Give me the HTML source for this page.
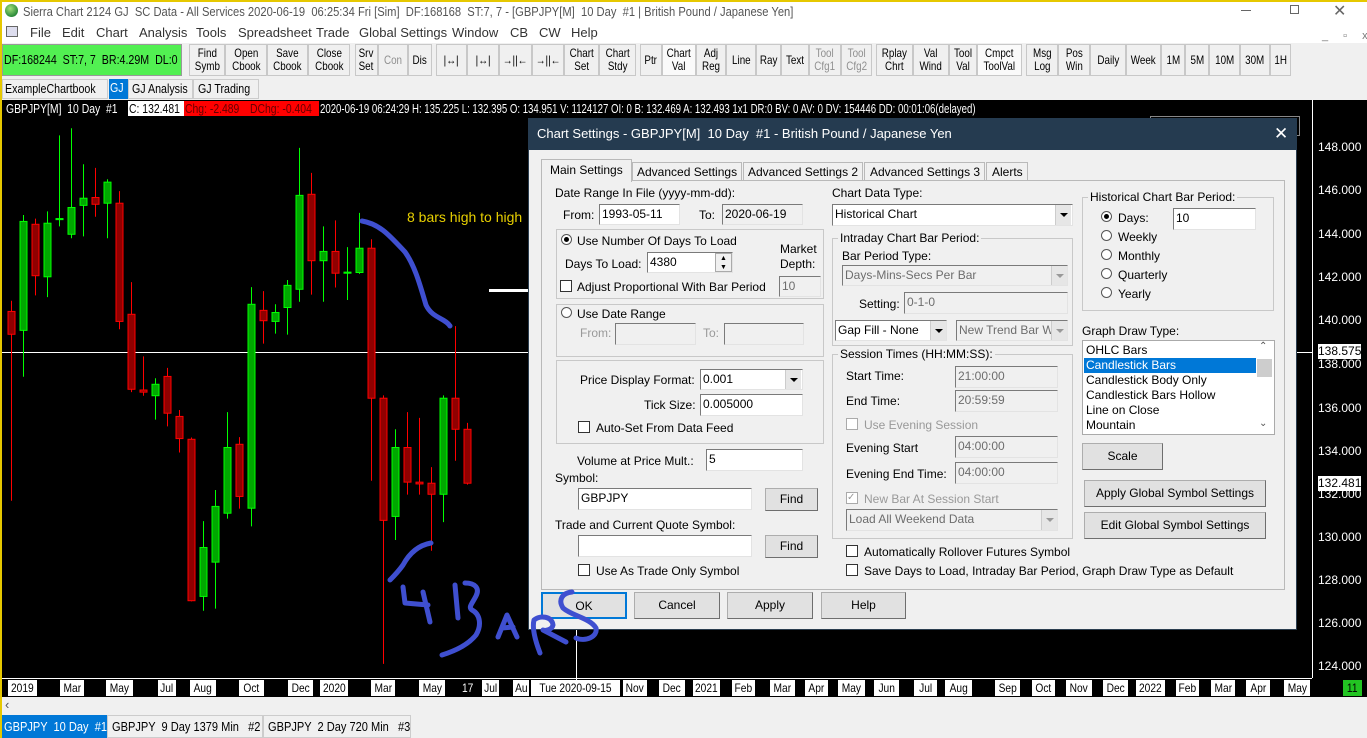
<!DOCTYPE html>
<html><head><meta charset="utf-8">
<style>
*{box-sizing:border-box;margin:0;padding:0}
body{width:1367px;height:738px;overflow:hidden;background:#f0f0f0;font-family:"Liberation Sans",sans-serif;font-size:12px;color:#000;position:relative}
.a{position:absolute;white-space:nowrap}
.sx{display:inline-block;transform:scaleX(.8);transform-origin:0 50%;white-space:nowrap}
.tb{position:absolute;top:44px;height:32px;border:1px solid #c8c8c8;background:#f0f0f0;font-size:12px;line-height:13px;text-align:center;display:flex;align-items:center;justify-content:center;overflow:visible}
.tb span{display:inline-block;transform:scaleX(.82);white-space:nowrap}
.g{color:#909090}
.dl{position:absolute;top:680px;height:16px;background:#fff;color:#000;font-size:12px;line-height:16px;text-align:center}
.dl span{display:inline-block;transform:scaleX(.85)}
.pl{position:absolute;left:1318px;color:#fff;font-size:12px;line-height:12px}
.in{position:absolute;background:#fff;border:1px solid #7a7a7a;border-right-color:#e3e3e3;border-bottom-color:#e3e3e3;padding-left:2px;line-height:19px;font-size:12px}
.dis{background:#f0f0f0;color:#6d6d6d}
.gb{position:absolute;border:1px solid #c8c8c8}
.btn{position:absolute;background:#e1e1e1;border:1px solid #adadad;border-right-color:#6e6e6e;border-bottom-color:#6e6e6e;text-align:center;font-size:12px}
.rb{position:absolute;width:11px;height:11px;border-radius:50%;border:1px solid #555;background:#fff}
.rb.on:after{content:"";position:absolute;left:2px;top:2px;width:5px;height:5px;border-radius:50%;background:#000}
.cb{position:absolute;width:12px;height:12px;border:1px solid #333;background:#fff}
.arr{position:absolute;width:16px;border-left:1px solid #ccc;background:#e6e6e6}
.arr:after{content:"";position:absolute;left:4px;top:8px;border-left:4px solid transparent;border-right:4px solid transparent;border-top:4px solid #000}
.arr.d:after{border-top-color:#999}
</style></head><body>
<!-- window frame -->
<div class="a" style="left:0;top:0;width:1367px;height:43px;background:#fff"></div>
<div class="a" style="left:0;top:0;width:2px;height:738px;background:#e6c800"></div>
<div class="a" style="left:0;top:0;width:1367px;height:2px;background:#e6c800"></div>
<div class="a" style="left:5px;top:4px;width:13px;height:13px;border-radius:50%;background:radial-gradient(circle at 40% 35%,#9fe07a,#2c8a3a 70%)"></div>
<div class="a" style="left:23px;top:4px;font-size:13px;color:#555"><span class="sx" style="transform:scaleX(.86)">Sierra Chart 2124 GJ &nbsp;SC Data - All Services 2020-06-19 &nbsp;06:25:34 Fri [Sim] &nbsp;DF:168168 &nbsp;ST:7, 7 - [GBPJPY[M] &nbsp;10 Day &nbsp;#1 | British Pound / Japanese Yen]</span></div>
<div class="a" style="left:1241px;top:10px;width:10px;height:1px;background:#666"></div>
<div class="a" style="left:1290px;top:5px;width:9px;height:9px;border:1px solid #666"></div>
<div class="a" style="left:1333px;top:1px;font-size:16px;color:#666">✕</div>
<div class="a" style="left:6px;top:26px;width:12px;height:11px;border:1px solid #666;background:#dde"></div>
<div class="a" style="top:25px;left:30px;font-size:13px;color:#333">File</div>
<div class="a" style="top:25px;left:62px;font-size:13px;color:#333">Edit</div>
<div class="a" style="top:25px;left:96px;font-size:13px;color:#333">Chart</div>
<div class="a" style="top:25px;left:139px;font-size:13px;color:#333">Analysis</div>
<div class="a" style="top:25px;left:196px;font-size:13px;color:#333">Tools</div>
<div class="a" style="top:25px;left:238px;font-size:13px;color:#333">Spreadsheet</div>
<div class="a" style="top:25px;left:316px;font-size:13px;color:#333">Trade</div>
<div class="a" style="top:25px;left:359px;font-size:13px;color:#333">Global Settings</div>
<div class="a" style="top:25px;left:452px;font-size:13px;color:#333">Window</div>
<div class="a" style="top:25px;left:510px;font-size:13px;color:#333">CB</div>
<div class="a" style="top:25px;left:539px;font-size:13px;color:#333">CW</div>
<div class="a" style="top:25px;left:571px;font-size:13px;color:#333">Help</div>
<div class="a" style="top:30px;left:1322px;font-size:11px;color:#777;letter-spacing:6px">_ ▫ x</div>
<!-- toolbar -->
<div class="a" style="left:2px;top:44px;width:180px;height:32px;background:#52f052;border:1px solid #999;line-height:30px;font-size:13px;padding-left:1px"><span class="sx" style="transform:scaleX(.82)">DF:168244 &nbsp;ST:7, 7 &nbsp;BR:4.29M &nbsp;DL:0</span></div>
<div class="tb" style="left:189px;width:36px"><span>Find<br>Symb</span></div>
<div class="tb" style="left:225px;width:42px"><span>Open<br>Cbook</span></div>
<div class="tb" style="left:267px;width:41px"><span>Save<br>Cbook</span></div>
<div class="tb" style="left:308px;width:42px"><span>Close<br>Cbook</span></div>
<div class="tb" style="left:355px;width:23px"><span>Srv<br>Set</span></div>
<div class="tb g" style="left:378px;width:30px"><span>Con</span></div>
<div class="tb" style="left:408px;width:24px"><span>Dis</span></div>
<div class="tb" style="left:436px;width:31px"><span>|↔|</span></div>
<div class="tb" style="left:467px;width:32px"><span>|↔|</span></div>
<div class="tb" style="left:499px;width:33px"><span>→||←</span></div>
<div class="tb" style="left:532px;width:32px"><span>→||←</span></div>
<div class="tb" style="left:564px;width:35px"><span>Chart<br>Set</span></div>
<div class="tb" style="left:599px;width:37px"><span>Chart<br>Stdy</span></div>
<div class="tb" style="left:640px;width:22px"><span>Ptr</span></div>
<div class="tb" style="left:662px;width:34px;background:#fafafa"><span>Chart<br>Val</span></div>
<div class="tb" style="left:696px;width:30px"><span>Adj<br>Reg</span></div>
<div class="tb" style="left:726px;width:30px"><span>Line</span></div>
<div class="tb" style="left:756px;width:25px"><span>Ray</span></div>
<div class="tb" style="left:781px;width:28px"><span>Text</span></div>
<div class="tb g" style="left:809px;width:32px"><span>Tool<br>Cfg1</span></div>
<div class="tb g" style="left:841px;width:31px"><span>Tool<br>Cfg2</span></div>
<div class="tb" style="left:876px;width:37px"><span>Rplay<br>Chrt</span></div>
<div class="tb" style="left:913px;width:36px"><span>Val<br>Wind</span></div>
<div class="tb" style="left:949px;width:28px"><span>Tool<br>Val</span></div>
<div class="tb" style="left:977px;width:45px;background:#fafafa"><span>Cmpct<br>ToolVal</span></div>
<div class="tb" style="left:1026px;width:32px"><span>Msg<br>Log</span></div>
<div class="tb" style="left:1058px;width:32px"><span>Pos<br>Win</span></div>
<div class="tb" style="left:1090px;width:36px"><span>Daily</span></div>
<div class="tb" style="left:1126px;width:35px"><span>Week</span></div>
<div class="tb" style="left:1161px;width:24px"><span>1M</span></div>
<div class="tb" style="left:1185px;width:24px"><span>5M</span></div>
<div class="tb" style="left:1209px;width:31px"><span>10M</span></div>
<div class="tb" style="left:1240px;width:30px"><span>30M</span></div>
<div class="tb" style="left:1270px;width:21px"><span>1H</span></div>
<!-- chartbook tabs -->
<div class="a" style="left:2px;top:79px;width:106px;height:20px;border:1px solid #ccc;line-height:18px;font-size:13px;padding-left:2px"><span class="sx" style="transform:scaleX(.82)">ExampleChartbook</span></div>
<div class="a" style="left:109px;top:79px;width:19px;height:20px;background:#0078d7;color:#fff;line-height:18px;font-size:13px;text-align:center"><span class="sx" style="transform:scaleX(.82)">GJ</span></div>
<div class="a" style="left:128px;top:79px;width:65px;height:20px;border:1px solid #ccc;line-height:18px;font-size:13px;padding-left:3px"><span class="sx" style="transform:scaleX(.82)">GJ Analysis</span></div>
<div class="a" style="left:193px;top:79px;width:66px;height:20px;border:1px solid #ccc;line-height:18px;font-size:13px;padding-left:4px"><span class="sx" style="transform:scaleX(.82)">GJ Trading</span></div>
<!-- chart -->
<div class="a" style="left:2px;top:100px;width:1365px;height:597px;background:#000"></div>
<div class="a" style="left:6px;top:101px;height:15px;line-height:15px;color:#fff;font-size:13px"><span class="sx">GBPJPY[M] &nbsp;10 Day &nbsp;#1</span></div>
<div class="a" style="left:128px;top:101px;width:56px;height:15px;background:#fff;line-height:15px;font-size:13px;padding-left:1px"><span class="sx">C: 132.481</span></div>
<div class="a" style="left:184px;top:101px;width:65px;height:15px;background:#f00;line-height:15px;font-size:13px;color:#600;padding-left:1px"><span class="sx">Chg: -2.489</span></div>
<div class="a" style="left:249px;top:101px;width:70px;height:15px;background:#f00;line-height:15px;font-size:13px;color:#600;padding-left:1px"><span class="sx">DChg: -0.404</span></div>
<div class="a" style="left:320px;top:101px;line-height:15px;color:#fff;font-size:13px"><span class="sx" style="transform:scaleX(.74)">2020-06-19 06:24:29 H: 135.225 L: 132.395 O: 134.951 V: 1124127 OI: 0 B: 132.469 A: 132.493 1x1 DR:0 BV: 0 AV: 0 DV: 154446 DD: 00:01:06(delayed)</span></div>
<div class="a" style="left:2px;top:352px;width:1310px;height:1px;background:#fff"></div>
<div class="a" style="left:489px;top:289px;width:40px;height:3px;background:#fff"></div>
<div class="a" style="left:576px;top:625px;width:1px;height:55px;background:#fff"></div>
<div class="a" style="left:1150px;top:116px;width:150px;height:20px;border:1px solid #888;background:#000"></div>
<svg class="a" id="cs" style="left:0;top:0" width="1367" height="738"></svg>
<div class="a" style="left:407px;top:209px;color:#e8d000;font-size:14px">8 bars high to high</div>
<!-- price axis -->
<div class="a" style="left:1312px;top:100px;width:1px;height:578px;background:#fff"></div>
<div class="pl" style="top:141px">148.000</div>
<div class="pl" style="top:184px">146.000</div>
<div class="pl" style="top:228px">144.000</div>
<div class="pl" style="top:271px">142.000</div>
<div class="pl" style="top:314px">140.000</div>
<div class="pl" style="top:358px">138.000</div>
<div class="pl" style="top:402px">136.000</div>
<div class="pl" style="top:445px">134.000</div>
<div class="pl" style="top:488px">132.000</div>
<div class="pl" style="top:531px">130.000</div>
<div class="pl" style="top:574px">128.000</div>
<div class="pl" style="top:617px">126.000</div>
<div class="pl" style="top:660px">124.000</div>
<div class="a" style="left:1318px;top:344px;width:43px;height:15px;background:#fff;font-size:12px;line-height:15px">138.575</div>
<div class="a" style="left:1318px;top:476px;width:43px;height:15px;background:#fff;font-size:12px;line-height:15px">132.481</div>
<!-- date axis -->
<div class="a" style="left:2px;top:678px;width:1310px;height:1px;background:#fff"></div>
<div class="dl" style="left:8px;width:29px"><span>2019</span></div>
<div class="dl" style="left:60px;width:24px"><span>Mar</span></div>
<div class="dl" style="left:106px;width:27px"><span>May</span></div>
<div class="dl" style="left:158px;width:18px"><span>Jul</span></div>
<div class="dl" style="left:190px;width:26px"><span>Aug</span></div>
<div class="dl" style="left:239px;width:25px"><span>Oct</span></div>
<div class="dl" style="left:288px;width:25px"><span>Dec</span></div>
<div class="dl" style="left:320px;width:28px"><span>2020</span></div>
<div class="dl" style="left:371px;width:24px"><span>Mar</span></div>
<div class="dl" style="left:419px;width:26px"><span>May</span></div>
<div class="dl" style="left:459px;width:18px;background:#000;color:#fff"><span>17</span></div>
<div class="dl" style="left:482px;width:17px"><span>Jul</span></div>
<div class="dl" style="left:513px;width:16px"><span>Au</span></div>
<div class="dl" style="left:531px;width:89px"><span>Tue 2020-09-15</span></div>
<div class="dl" style="left:623px;width:24px"><span>Nov</span></div>
<div class="dl" style="left:659px;width:26px"><span>Dec</span></div>
<div class="dl" style="left:693px;width:27px"><span>2021</span></div>
<div class="dl" style="left:732px;width:23px"><span>Feb</span></div>
<div class="dl" style="left:770px;width:25px"><span>Mar</span></div>
<div class="dl" style="left:805px;width:23px"><span>Apr</span></div>
<div class="dl" style="left:838px;width:27px"><span>May</span></div>
<div class="dl" style="left:874px;width:25px"><span>Jun</span></div>
<div class="dl" style="left:914px;width:23px"><span>Jul</span></div>
<div class="dl" style="left:945px;width:27px"><span>Aug</span></div>
<div class="dl" style="left:995px;width:25px"><span>Sep</span></div>
<div class="dl" style="left:1032px;width:23px"><span>Oct</span></div>
<div class="dl" style="left:1066px;width:26px"><span>Nov</span></div>
<div class="dl" style="left:1103px;width:25px"><span>Dec</span></div>
<div class="dl" style="left:1136px;width:29px"><span>2022</span></div>
<div class="dl" style="left:1176px;width:23px"><span>Feb</span></div>
<div class="dl" style="left:1211px;width:24px"><span>Mar</span></div>
<div class="dl" style="left:1246px;width:24px"><span>Apr</span></div>
<div class="dl" style="left:1284px;width:26px"><span>May</span></div>
<div class="dl" style="left:1343px;width:19px;background:#22c422;color:#000"><span>11</span></div>
<!-- scroll / bottom tabs -->
<div class="a" style="left:2px;top:697px;width:1365px;height:17px;background:#f0f0f0"></div>
<div class="a" style="left:5px;top:697px;font-size:13px;color:#555">‹</div>
<div class="a" style="left:2px;top:715px;width:105px;height:23px;background:#0078d7;color:#fff;font-size:13px;line-height:23px;padding-left:2px"><span class="sx" style="transform:scaleX(.85)">GBPJPY &nbsp;10 Day &nbsp;#1</span></div>
<div class="a" style="left:107px;top:715px;width:156px;height:23px;border:1px solid #ccc;font-size:13px;line-height:21px;padding-left:4px"><span class="sx" style="transform:scaleX(.85)">GBPJPY &nbsp;9 Day 1379 Min &nbsp;&nbsp;#2</span></div>
<div class="a" style="left:263px;top:715px;width:148px;height:23px;border:1px solid #ccc;font-size:13px;line-height:21px;padding-left:4px"><span class="sx" style="transform:scaleX(.85)">GBPJPY &nbsp;2 Day 720 Min &nbsp;&nbsp;#3</span></div>
<!-- dialog -->
<div class="a" style="left:528px;top:118px;width:769px;height:512px;background:#f0f0f0;border:1px solid #2b3e50"></div>
<div class="a" style="left:528px;top:118px;width:769px;height:32px;background:#253b50"></div>
<div class="a" style="left:537px;top:126px;color:#fff;font-size:13px">Chart Settings - GBPJPY[M] &nbsp;10 Day &nbsp;#1 - British Pound / Japanese Yen</div>
<div class="a" style="left:1274px;top:124px;color:#fff;font-size:17px">✕</div>
<div class="a" style="left:541px;top:180px;width:744px;height:410px;border:1px solid #b9b9b9;background:#f0f0f0"></div>
<div class="a" style="left:541px;top:159px;width:91px;height:23px;border:1px solid #b9b9b9;border-bottom:none;background:#f0f0f0;padding:3px 0 0 8px;font-size:12px">Main Settings</div>
<div class="a" style="left:632px;top:162px;width:110px;height:19px;border:1px solid #b9b9b9;padding:2px 0 0 4px">Advanced Settings</div>
<div class="a" style="left:743px;top:162px;width:120px;height:19px;border:1px solid #b9b9b9;padding:2px 0 0 4px">Advanced Settings 2</div>
<div class="a" style="left:864px;top:162px;width:121px;height:19px;border:1px solid #b9b9b9;padding:2px 0 0 5px">Advanced Settings 3</div>
<div class="a" style="left:986px;top:162px;width:42px;height:19px;border:1px solid #b9b9b9;padding:2px 0 0 5px">Alerts</div>
<!-- left column -->
<div class="a" style="left:555px;top:186px">Date Range In File (yyyy-mm-dd):</div>
<div class="a" style="left:563px;top:208px">From:</div>
<div class="in" style="left:599px;top:204px;width:81px;height:21px">1993-05-11</div>
<div class="a" style="left:699px;top:208px">To:</div>
<div class="in dis" style="left:722px;top:204px;width:81px;height:21px;color:#000">2020-06-19</div>
<div class="gb" style="left:556px;top:229px;width:268px;height:70px"></div>
<div class="rb on" style="left:561px;top:234px"></div>
<div class="a" style="left:577px;top:234px">Use Number Of Days To Load</div>
<div class="a" style="left:565px;top:257px">Days To Load:</div>
<div class="in" style="left:647px;top:252px;width:86px;height:21px">4380</div>
<div class="a" style="left:715px;top:253px;width:17px;height:19px;border:1px solid #aaa;background:#f0f0f0;font-size:7px;line-height:9px;text-align:center">▲<br>▼</div>
<div class="a" style="left:780px;top:242px;line-height:15px">Market<br>Depth:</div>
<div class="in dis" style="left:779px;top:276px;width:42px;height:21px">10</div>
<div class="cb" style="left:560px;top:280px"></div>
<div class="a" style="left:577px;top:280px">Adjust Proportional With Bar Period</div>
<div class="gb" style="left:556px;top:304px;width:268px;height:53px"></div>
<div class="rb" style="left:561px;top:307px"></div>
<div class="a" style="left:577px;top:307px">Use Date Range</div>
<div class="a" style="left:580px;top:326px;color:#999">From:</div>
<div class="in dis" style="left:615px;top:323px;width:81px;height:22px"></div>
<div class="a" style="left:703px;top:326px;color:#999">To:</div>
<div class="in dis" style="left:724px;top:323px;width:80px;height:22px"></div>
<div class="gb" style="left:556px;top:360px;width:268px;height:84px"></div>
<div class="a" style="left:580px;top:373px">Price Display Format:</div>
<div class="in" style="left:700px;top:369px;width:103px;height:21px">0.001</div>
<div class="arr" style="left:785px;top:370px;height:19px"></div>
<div class="a" style="left:644px;top:398px">Tick Size:</div>
<div class="in" style="left:700px;top:394px;width:103px;height:22px">0.005000</div>
<div class="cb" style="left:578px;top:421px"></div>
<div class="a" style="left:596px;top:421px">Auto-Set From Data Feed</div>
<div class="a" style="left:577px;top:454px">Volume at Price Mult.:</div>
<div class="in" style="left:706px;top:449px;width:97px;height:22px">5</div>
<div class="a" style="left:555px;top:471px">Symbol:</div>
<div class="in" style="left:578px;top:488px;width:174px;height:22px">GBPJPY</div>
<div class="btn" style="left:765px;top:488px;width:53px;height:23px;line-height:21px">Find</div>
<div class="a" style="left:555px;top:518px">Trade and Current Quote Symbol:</div>
<div class="in" style="left:578px;top:535px;width:174px;height:22px"></div>
<div class="btn" style="left:765px;top:535px;width:53px;height:23px;line-height:21px">Find</div>
<div class="cb" style="left:578px;top:564px"></div>
<div class="a" style="left:596px;top:564px">Use As Trade Only Symbol</div>
<!-- middle column -->
<div class="a" style="left:832px;top:186px">Chart Data Type:</div>
<div class="in" style="left:832px;top:204px;width:241px;height:22px">Historical Chart</div>
<div class="arr" style="left:1055px;top:205px;height:20px"></div>
<div class="gb" style="left:832px;top:238px;width:241px;height:108px"></div>
<div class="a" style="left:838px;top:231px;background:#f0f0f0;padding:0 2px">Intraday Chart Bar Period:</div>
<div class="a" style="left:842px;top:249px">Bar Period Type:</div>
<div class="in dis" style="left:842px;top:265px;width:226px;height:21px">Days-Mins-Secs Per Bar</div>
<div class="arr d" style="left:1051px;top:266px;height:19px"></div>
<div class="a" style="left:859px;top:297px">Setting:</div>
<div class="in dis" style="left:904px;top:292px;width:164px;height:22px">0-1-0</div>
<div class="in" style="left:835px;top:320px;width:112px;height:21px">Gap Fill - None</div>
<div class="arr" style="left:930px;top:321px;height:19px"></div>
<div class="in dis" style="left:956px;top:320px;width:112px;height:21px;overflow:hidden">New Trend Bar W</div>
<div class="arr d" style="left:1051px;top:321px;height:19px"></div>
<div class="gb" style="left:832px;top:354px;width:241px;height:185px"></div>
<div class="a" style="left:838px;top:347px;background:#f0f0f0;padding:0 2px">Session Times (HH:MM:SS):</div>
<div class="a" style="left:846px;top:369px">Start Time:</div>
<div class="in dis" style="left:955px;top:366px;width:103px;height:22px">21:00:00</div>
<div class="a" style="left:846px;top:394px">End Time:</div>
<div class="in dis" style="left:955px;top:390px;width:103px;height:22px">20:59:59</div>
<div class="cb" style="left:846px;top:418px;border-color:#aaa"></div>
<div class="a" style="left:864px;top:418px;color:#999">Use Evening Session</div>
<div class="a" style="left:846px;top:441px">Evening Start</div>
<div class="in dis" style="left:955px;top:436px;width:103px;height:22px">04:00:00</div>
<div class="a" style="left:846px;top:467px">Evening End Time:</div>
<div class="in dis" style="left:955px;top:462px;width:103px;height:22px">04:00:00</div>
<div class="cb" style="left:846px;top:492px;border-color:#aaa;font-size:10px;line-height:10px;color:#999">✓</div>
<div class="a" style="left:864px;top:492px;color:#999">New Bar At Session Start</div>
<div class="in dis" style="left:846px;top:509px;width:212px;height:22px">Load All Weekend Data</div>
<div class="arr d" style="left:1041px;top:510px;height:20px"></div>
<div class="cb" style="left:846px;top:545px"></div>
<div class="a" style="left:864px;top:545px">Automatically Rollover Futures Symbol</div>
<div class="cb" style="left:846px;top:564px"></div>
<div class="a" style="left:864px;top:564px">Save Days to Load, Intraday Bar Period, Graph Draw Type as Default</div>
<!-- right column -->
<div class="gb" style="left:1082px;top:197px;width:192px;height:114px"></div>
<div class="a" style="left:1088px;top:190px;background:#f0f0f0;padding:0 2px">Historical Chart Bar Period:</div>
<div class="rb on" style="left:1101px;top:211px"></div><div class="a" style="left:1118px;top:211px">Days:</div>
<div class="in" style="left:1173px;top:208px;width:83px;height:22px">10</div>
<div class="rb" style="left:1101px;top:230px"></div><div class="a" style="left:1118px;top:230px">Weekly</div>
<div class="rb" style="left:1101px;top:249px"></div><div class="a" style="left:1118px;top:249px">Monthly</div>
<div class="rb" style="left:1101px;top:268px"></div><div class="a" style="left:1118px;top:268px">Quarterly</div>
<div class="rb" style="left:1101px;top:287px"></div><div class="a" style="left:1118px;top:287px">Yearly</div>
<div class="a" style="left:1082px;top:324px">Graph Draw Type:</div>
<div class="a" style="left:1082px;top:340px;width:193px;height:95px;background:#fff;border:1px solid #aaa"></div>
<div class="a" style="left:1086px;top:343px;line-height:15px">OHLC Bars</div>
<div class="a" style="left:1084px;top:358px;width:172px;height:15px;background:#0078d7"></div>
<div class="a" style="left:1086px;top:358px;line-height:15px;color:#fff">Candlestick Bars</div>
<div class="a" style="left:1086px;top:373px;line-height:15px">Candlestick Body Only</div>
<div class="a" style="left:1086px;top:388px;line-height:15px">Candlestick Bars Hollow</div>
<div class="a" style="left:1086px;top:403px;line-height:15px">Line on Close</div>
<div class="a" style="left:1086px;top:418px;line-height:15px">Mountain</div>
<div class="a" style="left:1257px;top:359px;width:15px;height:18px;background:#cdcdcd"></div>
<div class="a" style="left:1259px;top:341px;font-size:10px;color:#555">⌃</div>
<div class="a" style="left:1259px;top:418px;font-size:10px;color:#555">⌄</div>
<div class="btn" style="left:1082px;top:443px;width:81px;height:27px;line-height:25px">Scale</div>
<div class="btn" style="left:1084px;top:480px;width:182px;height:27px;line-height:25px">Apply Global Symbol Settings</div>
<div class="btn" style="left:1084px;top:512px;width:182px;height:27px;line-height:25px">Edit Global Symbol Settings</div>
<!-- bottom buttons -->
<div class="btn" style="left:541px;top:592px;width:86px;height:27px;line-height:25px;border:2px solid #0078d7">OK</div>
<div class="btn" style="left:634px;top:592px;width:86px;height:27px;line-height:25px">Cancel</div>
<div class="btn" style="left:727px;top:592px;width:86px;height:27px;line-height:25px">Apply</div>
<div class="btn" style="left:821px;top:592px;width:85px;height:27px;line-height:25px">Help</div>
<!-- annotations on top -->
<svg class="a" style="left:0;top:0" width="1367" height="738">
<g fill="none" stroke="#3f4fd0" stroke-width="5" stroke-linecap="round" stroke-linejoin="round">
<path d="M362,221 C380,224 390,236 405,252 C415,266 420,285 426,305 C432,318 445,318 450,326"/>
<path d="M431,543 C420,545 410,552 403,565 C398,572 394,576 390,580"/>
<path d="M403,587 L405,603 L428,605 M423,592 L430,622"/>
<path d="M455,585 L458,618"/>
<path d="M465,583 C475,583 480,588 476,596 C472,604 468,607 472,610 C480,614 482,625 476,635 C468,645 455,651 442,655"/>
<path d="M498,637 L507,615 L517,637 M502,628 L513,627"/>
<path d="M540,653 C535,640 532,628 534,620 C540,615 552,616 553,625 C552,630 545,631 543,630 L566,642"/>
<path d="M572,592 C562,593 558,600 563,608 C572,616 590,618 596,628 C598,637 585,642 576,638"/>
</g>
</svg>
<script>
var d=[[33,520,550,614,1080,0],[69,280,298,603,733,1],[104,290,306,450,505,0],[140,270,303,453,510,1],[176,57,290,293,312,1],[211,37,259,334,345,1],[247,138,233,253,340,1],[282,148,231,250,285,0],[318,180,188,247,345,1],[353,213,247,578,600,0],[389,468,558,768,776,0],[424,676,770,776,786,0],[460,737,754,786,853,1],[495,708,732,835,872,0],[531,826,844,906,945,0],[566,903,908,1360,1362,0],[602,1137,1211,1348,1388,1],[637,1050,1096,1252,1382,1],[673,832,931,1115,1130,1],[708,902,922,1068,1102,0],[744,482,530,1101,1152,1],[779,493,547,576,640,0],[815,530,553,578,612,1],[850,462,477,539,615,1],[886,92,225,488,523,1],[921,162,222,408,503,0],[957,312,382,408,523,1],[992,295,382,443,483,0],[1028,370,440,443,518,1],[1063,274,373,441,445,1],[1099,348,373,793,1024,0],[1134,785,793,1135,1537,0],[1170,880,931,1124,1190,1],[1205,832,931,1028,1063,0],[1241,848,1028,1033,1063,0],[1276,986,1031,1062,1220,0],[1312,785,793,1062,1140,1],[1347,591,793,880,968,0],[1383,862,880,1031,1035,0]];
var s='';d.forEach(function(c){var x=Math.round(c[0]/2.96)+0.5,Y=function(v){return v/2.8+115};var col=c[5]?'#00ff00':'#ff0000',f=c[5]?'#00a800':'#900000';
s+='<line x1="'+x+'" x2="'+x+'" y1="'+Y(c[1])+'" y2="'+Y(c[4])+'" stroke="'+col+'" stroke-width="1"/>';
var h=Math.max(Y(c[3])-Y(c[2]),1);s+='<rect x="'+(x-3.5)+'" y="'+Y(c[2])+'" width="7" height="'+h+'" fill="'+f+'" stroke="'+col+'" stroke-width="1"/>';});
document.getElementById('cs').innerHTML=s;
</script>
</body></html>
